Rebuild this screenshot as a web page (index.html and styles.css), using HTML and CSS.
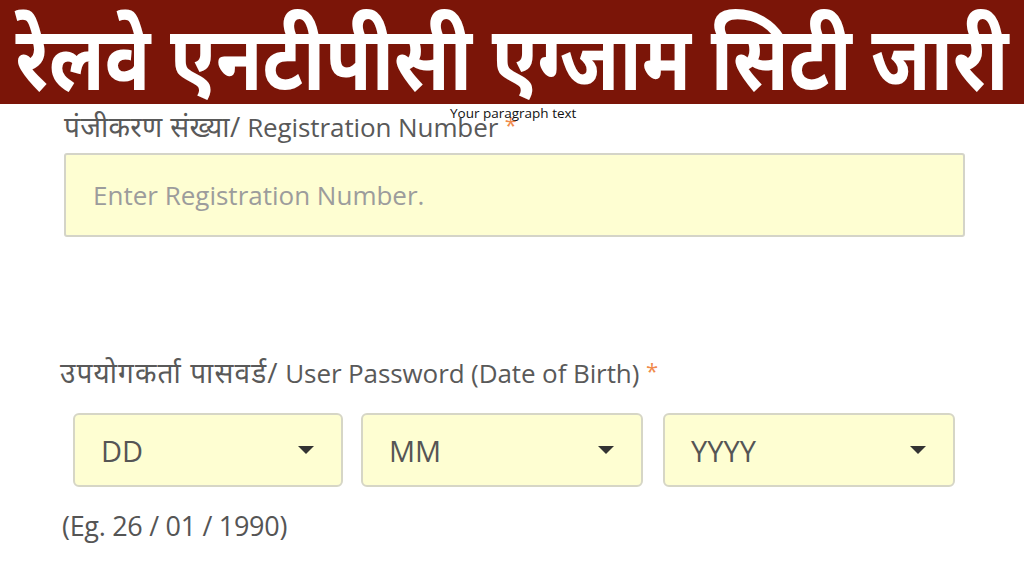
FILE: index.html
```html
<!DOCTYPE html>
<html lang="hi">
<head>
<meta charset="utf-8">
<link rel="stylesheet" href="styles.css">
</head>
<body>
<header class="banner">
  <h1 class="banner-title">रेलवे एनटीपीसी एग्जाम सिटी जारी</h1>
</header>
<main class="form">
  <div class="label-row">
    <label class="field-label"><span class="dev">पंजीकरण संख्या/</span> Registration Number <span class="req">*</span></label>
    <span class="note">Your paragraph text</span>
  </div>
  <div class="text-input">Enter Registration Number.</div>

  <label class="field-label label-two"><span class="dev dev-wide">उपयोगकर्ता पासवर्ड/</span> User Password (Date of Birth) <span class="req">*</span></label>
  <div class="selects">
    <div class="select sel-dd"><span>DD</span><span class="caret"></span></div>
    <div class="select sel-mm"><span>MM</span><span class="caret"></span></div>
    <div class="select sel-yy"><span>YYYY</span><span class="caret"></span></div>
  </div>
  <p class="example">(Eg. 26 / 01 / 1990)</p>
</main>
</body>
</html>
```
FILE: styles.css
```css
* { box-sizing: border-box; }
html, body { margin: 0; padding: 0; background: #fff; }
body { width: 1024px; height: 576px; overflow: hidden; font-family: "Open Sans", "Noto Sans", sans-serif; }

.banner {
  background: #7b1508;
  height: 104px;
  display: flex;
  align-items: center;
  justify-content: center;
  overflow: hidden;
}
.banner-title {
  margin: 0;
  color: #fff;
  font-size: 90px;
  font-weight: 700;
  line-height: 1;
  white-space: nowrap;
  transform: scaleX(0.84);
  padding-top: 6px;
  flex-shrink: 0;
}

.form { padding: 0 0 0 64px; }

.label-row { position: relative; height: 48px; }
.field-label {
  display: block;
  color: #595959;
  font-size: 26px;
  line-height: 1;
  padding-top: 8px;
  letter-spacing: -0.1px;
  white-space: nowrap;
}
.dev { font-size: 28px; letter-spacing: 0.3px; }
.dev-wide { letter-spacing: 1.1px; }
.req { color: #f08a4b; font-size: 22px; vertical-align: 4px; }
.note {
  position: absolute;
  left: 386px;
  top: 0;
  font-size: 13.5px;
  color: #111;
}

.text-input {
  width: 901px;
  height: 84px;
  margin-top: 1px;
  background: #fefed2;
  border: 2px solid #d4d4c8;
  border-radius: 3px;
  color: #9c9c9c;
  font-size: 26px;
  display: flex;
  align-items: center;
  padding-left: 27px;
}

.label-two { padding-top: 121px; margin-left: -4px; }

.selects {
  display: flex;
  gap: 18px;
  margin-top: 27px;
  margin-left: 9px;
}
.select {
  height: 74px;
  background: #fefed2;
  border: 2px solid #d6d6c6;
  border-radius: 6px;
  display: flex;
  align-items: center;
  justify-content: space-between;
  padding: 0 27px 0 26px;
  color: #555;
  font-size: 29px;
}
.sel-dd { width: 270px; }
.sel-mm { width: 282px; }
.sel-yy { width: 292px; margin-left: 2px; }
.caret {
  width: 0; height: 0;
  border-left: 8px solid transparent;
  border-right: 8px solid transparent;
  border-top: 8px solid #333;
}
.example {
  margin: 20px 0 0 -2px;
  color: #555;
  font-size: 27px;
  letter-spacing: -0.3px;
}
```
